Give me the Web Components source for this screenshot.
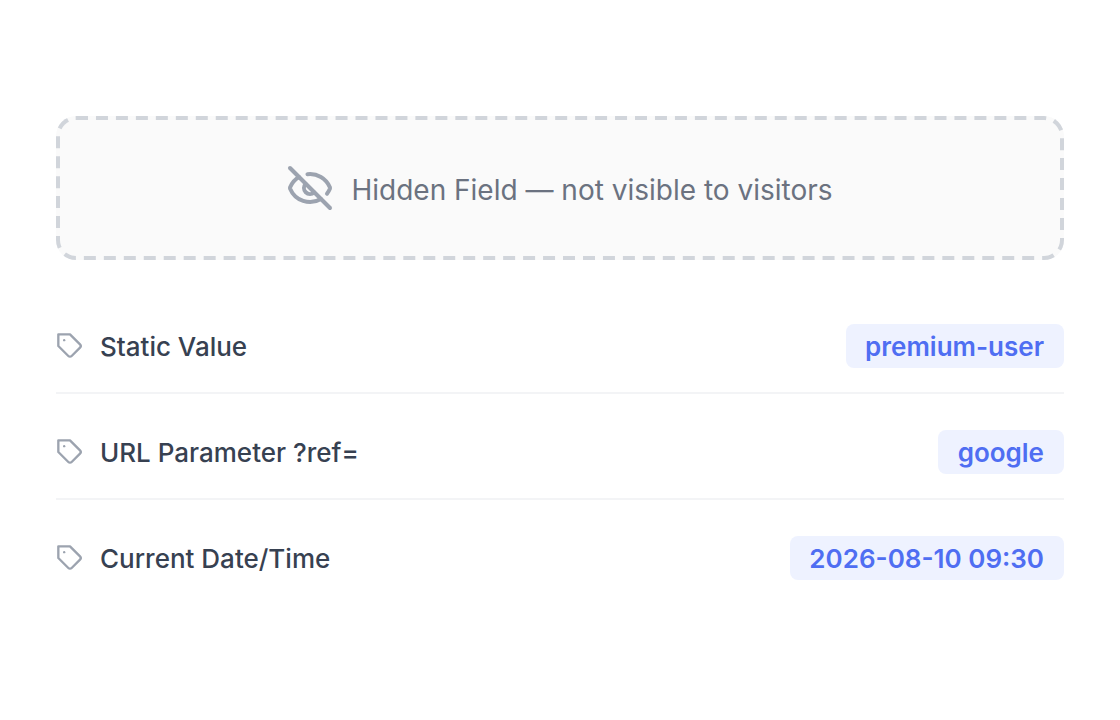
<!DOCTYPE html>
<html lang="en">
<head>
<meta charset="UTF-8">
<title>Hidden Field</title>
<style>
    body {
        margin: 0;
        background: #fff;
        font-family: Inter, "Liberation Sans", sans-serif;
    }
</style>
</head>
<body>
<hidden-field-card>
    <hidden-notice>Hidden Field — not visible to visitors</hidden-notice>
    <value-row value="premium-user">Static Value</value-row>
    <value-row value="google">URL Parameter ?ref=</value-row>
    <value-row value="2026-08-10 09:30">Current Date/Time</value-row>
</hidden-field-card>

<script>
class HiddenFieldCard extends HTMLElement {
    constructor() {
        super();
        this.attachShadow({ mode: 'open' });
        this.shadowRoot.innerHTML = `
            <style>
                :host {
                    display: flex;
                    flex-direction: column;
                    box-sizing: border-box;
                    height: 720px;
                    padding: 116px 56px 0;
                }
                ::slotted(hidden-notice) {
                    margin-bottom: 40px;
                }
                ::slotted(value-row:not(:last-child)) {
                    border-bottom: 2px solid #f3f4f6;
                }
            </style>
            <slot></slot>
        `;
    }
}
customElements.define('hidden-field-card', HiddenFieldCard);

class HiddenNotice extends HTMLElement {
    constructor() {
        super();
        this.attachShadow({ mode: 'open' });
        this.shadowRoot.innerHTML = `
            <style>
                :host {
                    display: flex;
                    align-items: center;
                    justify-content: center;
                    gap: 17px;
                    position: relative;
                    box-sizing: border-box;
                    height: 144px;
                    border-radius: 20px;
                    background: #fafafa;
                    color: #6b7280;
                    font-size: 28px;
                }
                /* drawn at half size and doubled, for longer dashes */
                :host::before {
                    content: '';
                    position: absolute;
                    top: 0;
                    left: 0;
                    box-sizing: border-box;
                    width: 50%;
                    height: 50%;
                    border: 2px dashed #d1d5db;
                    border-radius: 10px;
                    transform: scale(2);
                    transform-origin: 0 0;
                }
                svg {
                    width: 48px;
                    height: 48px;
                    margin-left: -1px;
                    color: #9ca3af;
                }
                span {
                    padding-top: 4px;
                }
            </style>
            <svg viewBox="0 0 24 24" fill="none" stroke="currentColor" stroke-width="2" stroke-linecap="round" stroke-linejoin="round">
                <path d="M10.733 5.076a10.744 10.744 0 0 1 11.205 6.575 1 1 0 0 1 0 .696 10.747 10.747 0 0 1-1.444 2.49"/>
                <path d="M14.084 14.158a3 3 0 0 1-4.242-4.242"/>
                <path d="M17.479 17.499a10.75 10.75 0 0 1-15.417-5.151 1 1 0 0 1 0-.696 10.75 10.75 0 0 1 4.446-5.143"/>
                <path d="M2 2l20 20"/>
            </svg>
            <span><slot></slot></span>
        `;
    }
}
customElements.define('hidden-notice', HiddenNotice);

class ValueRow extends HTMLElement {
    constructor() {
        super();
        this.attachShadow({ mode: 'open' });
        this.shadowRoot.innerHTML = `
            <style>
                :host {
                    display: flex;
                    align-items: center;
                    height: 44px;
                    padding: 36px 0 24px;
                }
                :host(:first-of-type) {
                    padding-top: 24px;
                }
                svg {
                    width: 28px;
                    height: 28px;
                    margin-right: 16px;
                    color: #9ca3af;
                }
                .label {
                    flex: 1;
                    color: #374151;
                    font-size: 26px;
                    font-weight: 500;
                }
                .value {
                    height: 44px;
                    padding: 0 20px 0 19.6px;
                    border-radius: 8px;
                    background: #eef2ff;
                    color: #4f6ef2;
                    font-size: 26px;
                    font-weight: 600;
                    line-height: 46px;
                }
            </style>
            <svg viewBox="0 0 24 24" fill="none" stroke="currentColor" stroke-width="2" stroke-linecap="round" stroke-linejoin="round">
                <path d="M20.59 13.41l-7.17 7.17a2 2 0 0 1-2.83 0L2 12V2h10l8.59 8.59a2 2 0 0 1 0 2.82z"/>
                <path d="M7 7h.01"/>
            </svg>
            <span class="label"><slot></slot></span>
            <span class="value"></span>
        `;
    }

    connectedCallback() {
        this.shadowRoot.querySelector('.value').textContent = this.getAttribute('value');
    }
}
customElements.define('value-row', ValueRow);
</script>
</body>
</html>
